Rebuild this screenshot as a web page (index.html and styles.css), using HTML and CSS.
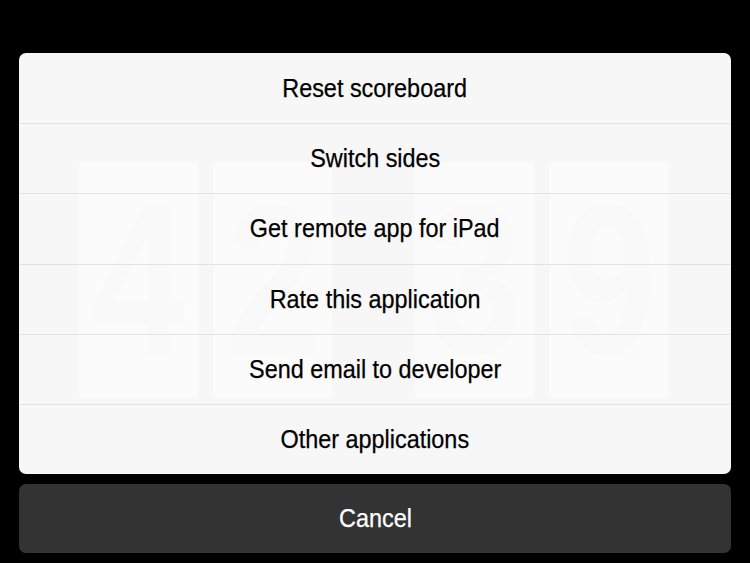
FILE: index.html
```html
<!DOCTYPE html>
<html lang="en">
<head>
    <meta charset="UTF-8">
    <meta name="viewport" content="width=device-width, initial-scale=1.0">
    <title>Scoreboard</title>
    <link rel="stylesheet" href="styles.css">
</head>
<body>
    <div class="board" aria-hidden="true">
        <div class="team">
            <div class="card"><span>4</span></div>
            <div class="card"><span>2</span></div>
        </div>
        <div class="team">
            <div class="card"><span>3</span></div>
            <div class="card"><span>9</span></div>
        </div>
    </div>

    <div class="overlay">
        <div class="sheet">
            <button class="item"><span>Reset scoreboard</span></button>
            <button class="item"><span>Switch sides</span></button>
            <button class="item"><span>Get remote app for iPad</span></button>
            <button class="item"><span>Rate this application</span></button>
            <button class="item"><span>Send email to developer</span></button>
            <button class="item"><span>Other applications</span></button>
        </div>
        <button class="cancel"><span>Cancel</span></button>
    </div>
</body>
</html>
```

FILE: styles.css
```css
body {
    margin: 0;
    width: 750px;
    height: 563px;
    background-color: #000;
    font-family: "Liberation Sans", Arial, sans-serif;
    position: relative;
    overflow: hidden;
}
.board {
    display: flex;
    justify-content: space-between;
    padding: 162px 82px 0 79px;
}
.team {
    display: flex;
    gap: 15px;
}
.card {
    width: 119px;
    height: 236px;
    background-color: #fff;
    color: #777;
    font-size: 215px;
    font-weight: bold;
    line-height: 236px;
    text-align: center;
}
.card span {
    display: inline-block;
    transform: scaleX(0.78);
}
.overlay {
    position: absolute;
    top: 53px;
    left: 19px;
    width: 712px;
    display: flex;
    flex-direction: column;
    gap: 10px;
}
.sheet {
    display: flex;
    flex-direction: column;
    border-radius: 7px;
    overflow: hidden;
    background-color: rgba(251, 251, 251, 0.985);
}
.item {
    height: 70.2px;
    border: none;
    border-top: 1px solid #e3e3e3;
    background: transparent;
    font-family: inherit;
    font-size: 26px;
    color: #000;
    padding: 0;
    cursor: pointer;
}
.item:first-child {
    border-top: none;
}
.item span,
.cancel span {
    display: inline-block;
    transform: scaleX(0.9);
    -webkit-text-stroke: 0.25px currentColor;
}
.cancel {
    height: 69px;
    border: none;
    border-radius: 7px;
    background-color: #333;
    color: #fff;
    font-family: inherit;
    font-size: 26px;
    padding: 0;
    cursor: pointer;
}
```
